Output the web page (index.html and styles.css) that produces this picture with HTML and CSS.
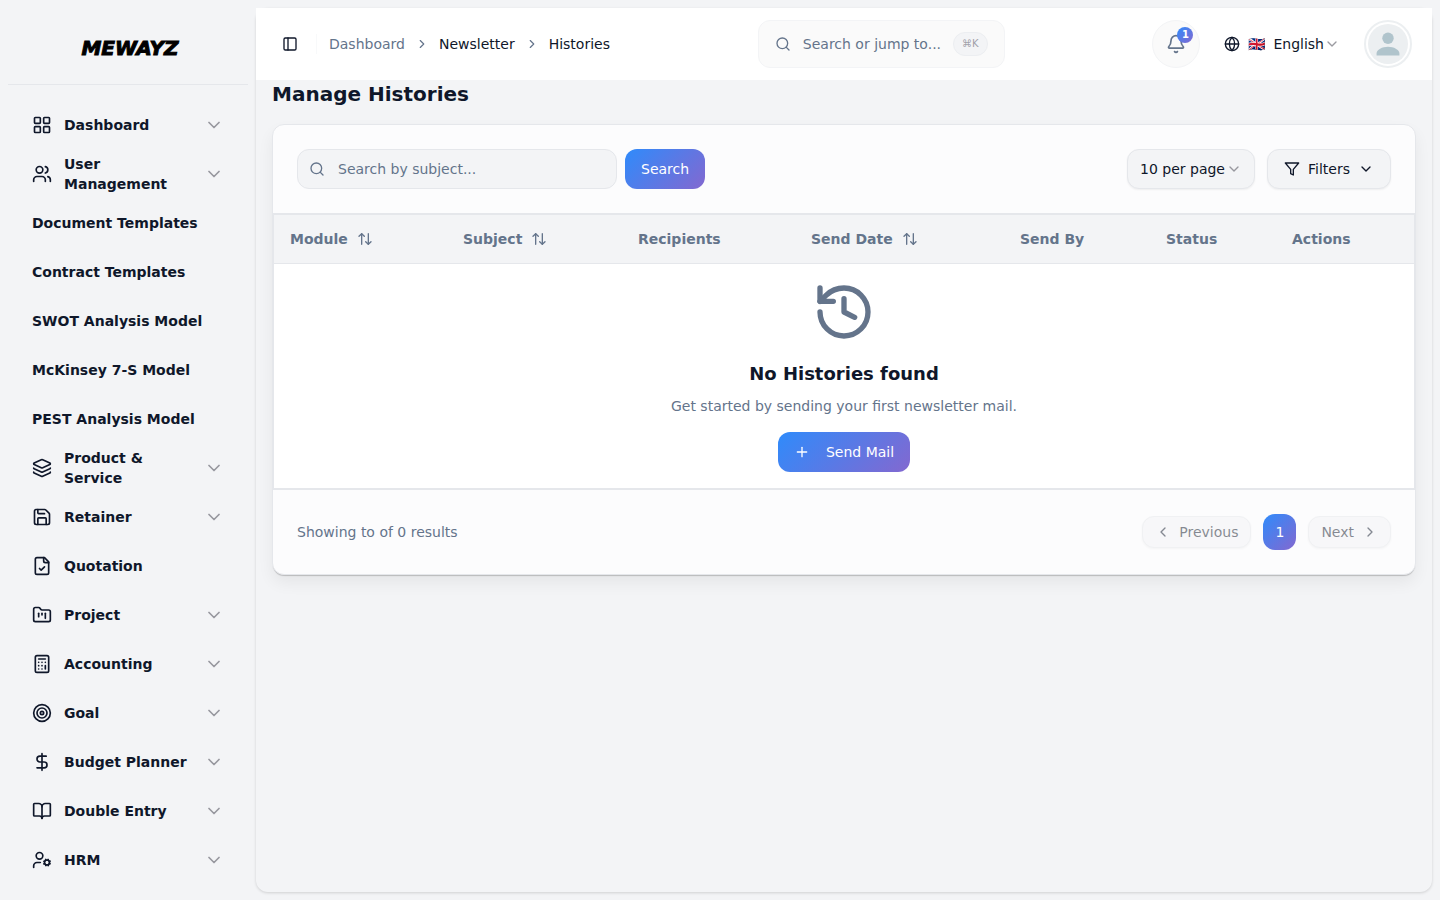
FILE: index.html
```html
<!DOCTYPE html>
<html lang="en">
<head>
  <meta charset="UTF-8">
  <meta name="viewport" content="width=device-width, initial-scale=1.0">
  <title>Manage Histories</title>
  <link rel="stylesheet" href="styles.css">
</head>
<body>
  <!-- icons used more than once -->
  <svg class="sprite" aria-hidden="true">
    <symbol id="chevron-down" viewBox="0 0 24 24"><path d="m6 9 6 6 6-6"/></symbol>
    <symbol id="chevron-right" viewBox="0 0 24 24"><path d="m9 18 6-6-6-6"/></symbol>
    <symbol id="search" viewBox="0 0 24 24"><circle cx="11" cy="11" r="8"/><path d="m21 21-4.3-4.3"/></symbol>
    <symbol id="sort" viewBox="0 0 24 24"><path d="m21 16-4 4-4-4"/><path d="M17 20V4"/><path d="m3 8 4-4 4 4"/><path d="M7 4v16"/></symbol>
  </svg>

  <aside class="sidebar">
    <a href="#" class="logo">MEWAYZ</a>
    <nav class="menu">
      <a href="#">
        <svg class="icon" viewBox="0 0 24 24"><rect x="3" y="3" width="7" height="7" rx="1"/><rect x="14" y="3" width="7" height="7" rx="1"/><rect x="14" y="14" width="7" height="7" rx="1"/><rect x="3" y="14" width="7" height="7" rx="1"/></svg>
        <span>Dashboard</span>
        <svg class="icon arrow"><use href="#chevron-down"/></svg>
      </a>
      <a href="#">
        <svg class="icon" viewBox="0 0 24 24"><path d="M16 21v-2a4 4 0 0 0-4-4H6a4 4 0 0 0-4 4v2"/><circle cx="9" cy="7" r="4"/><path d="M22 21v-2a4 4 0 0 0-3-3.87"/><path d="M16 3.13a4 4 0 0 1 0 7.75"/></svg>
        <span>User Management</span>
        <svg class="icon arrow"><use href="#chevron-down"/></svg>
      </a>
      <a href="#"><span>Document Templates</span></a>
      <a href="#"><span>Contract Templates</span></a>
      <a href="#"><span>SWOT Analysis Model</span></a>
      <a href="#"><span>McKinsey 7-S Model</span></a>
      <a href="#"><span>PEST Analysis Model</span></a>
      <a href="#">
        <svg class="icon" viewBox="0 0 24 24"><path d="M12.83 2.18a2 2 0 0 0-1.66 0L2.6 6.08a1 1 0 0 0 0 1.83l8.58 3.91a2 2 0 0 0 1.66 0l8.58-3.9a1 1 0 0 0 0-1.83z"/><path d="M2 12a1 1 0 0 0 .58.91l8.6 3.91a2 2 0 0 0 1.65 0l8.58-3.9A1 1 0 0 0 22 12"/><path d="M2 17a1 1 0 0 0 .58.91l8.6 3.91a2 2 0 0 0 1.65 0l8.58-3.9A1 1 0 0 0 22 17"/></svg>
        <span>Product &amp; Service</span>
        <svg class="icon arrow"><use href="#chevron-down"/></svg>
      </a>
      <a href="#">
        <svg class="icon" viewBox="0 0 24 24"><path d="M15.2 3a2 2 0 0 1 1.4.6l3.8 3.8a2 2 0 0 1 .6 1.4V19a2 2 0 0 1-2 2H5a2 2 0 0 1-2-2V5a2 2 0 0 1 2-2z"/><path d="M17 21v-7a1 1 0 0 0-1-1H8a1 1 0 0 0-1 1v7"/><path d="M7 3v4a1 1 0 0 0 1 1h7"/></svg>
        <span>Retainer</span>
        <svg class="icon arrow"><use href="#chevron-down"/></svg>
      </a>
      <a href="#">
        <svg class="icon" viewBox="0 0 24 24"><path d="M15 2H6a2 2 0 0 0-2 2v16a2 2 0 0 0 2 2h12a2 2 0 0 0 2-2V7Z"/><path d="M14 2v4a2 2 0 0 0 2 2h4"/><path d="m9 15 2 2 4-4"/></svg>
        <span>Quotation</span>
      </a>
      <a href="#">
        <svg class="icon" viewBox="0 0 24 24"><path d="M4 20h16a2 2 0 0 0 2-2V8a2 2 0 0 0-2-2h-7.93a2 2 0 0 1-1.66-.9l-.82-1.2A2 2 0 0 0 7.93 3H4a2 2 0 0 0-2 2v13c0 1.1.9 2 2 2Z"/><path d="M8 10v4"/><path d="M12 10v2"/><path d="M16 10v6"/></svg>
        <span>Project</span>
        <svg class="icon arrow"><use href="#chevron-down"/></svg>
      </a>
      <a href="#">
        <svg class="icon" viewBox="0 0 24 24"><rect x="4" y="2" width="16" height="20" rx="2"/><path d="M8 6h8"/><path d="M16 14v4"/><path d="M16 10h.01M12 10h.01M8 10h.01M12 14h.01M8 14h.01M12 18h.01M8 18h.01"/></svg>
        <span>Accounting</span>
        <svg class="icon arrow"><use href="#chevron-down"/></svg>
      </a>
      <a href="#">
        <svg class="icon" viewBox="0 0 24 24"><circle cx="12" cy="12" r="10"/><circle cx="12" cy="12" r="6"/><circle cx="12" cy="12" r="2"/></svg>
        <span>Goal</span>
        <svg class="icon arrow"><use href="#chevron-down"/></svg>
      </a>
      <a href="#">
        <svg class="icon" viewBox="0 0 24 24"><path d="M12 2v20"/><path d="M17 5H9.500a3.500 3.500 0 0 0 0 7h5a3.500 3.500 0 0 1 0 7H6"/></svg>
        <span>Budget Planner</span>
        <svg class="icon arrow"><use href="#chevron-down"/></svg>
      </a>
      <a href="#">
        <svg class="icon" viewBox="0 0 24 24"><path d="M12 7v14"/><path d="M3 18a1 1 0 0 1-1-1V4a1 1 0 0 1 1-1h5a4 4 0 0 1 4 4 4 4 0 0 1 4-4h5a1 1 0 0 1 1 1v13a1 1 0 0 1-1 1h-6a3 3 0 0 0-3 3 3 3 0 0 0-3-3z"/></svg>
        <span>Double Entry</span>
        <svg class="icon arrow"><use href="#chevron-down"/></svg>
      </a>
      <a href="#">
        <svg class="icon" viewBox="0 0 24 24"><circle cx="9" cy="7" r="4"/><path d="M10 15H6a4 4 0 0 0-4 4v2"/><circle cx="18" cy="15" r="3"/><path d="m21.700 16.400-.9-.3M15.200 13.900l-.9-.3M16.600 18.700l.3-.9M19.100 12.200l.3-.9M19.600 18.700l-.4-1M16.800 12.300l-.4-1M14.300 16.600l1-.4M20.700 13.800l1-.4"/></svg>
        <span>HRM</span>
        <svg class="icon arrow"><use href="#chevron-down"/></svg>
      </a>
    </nav>
  </aside>

  <main class="content">
    <header class="topbar">
      <div class="topbar-left">
        <button class="toggle" aria-label="Toggle sidebar">
          <svg class="icon" viewBox="0 0 24 24"><rect x="3" y="3" width="18" height="18" rx="2"/><path d="M9 3v18"/></svg>
        </button>
        <nav class="breadcrumb" aria-label="Breadcrumb">
          <a href="#">Dashboard</a>
          <svg class="icon"><use href="#chevron-right"/></svg>
          <span>Newsletter</span>
          <svg class="icon"><use href="#chevron-right"/></svg>
          <span>Histories</span>
        </nav>
      </div>

      <button class="jump">
        <svg class="icon"><use href="#search"/></svg>
        <span>Search or jump to...</span>
        <kbd>⌘K</kbd>
      </button>

      <div class="topbar-right">
        <button class="bell" aria-label="Notifications">
          <svg class="icon" viewBox="0 0 24 24"><path d="M10.268 21a2 2 0 0 0 3.464 0"/><path d="M3.262 15.326A1 1 0 0 0 4 17h16a1 1 0 0 0 .74-1.673C19.410 13.956 18 12.499 18 8A6 6 0 0 0 6 8c0 4.499-1.411 5.956-2.738 7.326"/></svg>
          <span class="badge">1</span>
        </button>
        <button class="language">
          <svg class="icon" viewBox="0 0 24 24"><circle cx="12" cy="12" r="10"/><path d="M12 2a14.500 14.500 0 0 0 0 20 14.500 14.500 0 0 0 0-20"/><path d="M2 12h20"/></svg>
          <span>🇬🇧</span>
          <span>English</span>
          <svg class="icon arrow"><use href="#chevron-down"/></svg>
        </button>
        <button class="avatar" aria-label="Account">
          <svg viewBox="0 0 42 42"><circle cx="21" cy="21" r="21" fill="#eceff1"/><circle cx="21" cy="15" r="6" fill="#b0c4cc"/><path d="M9 33v-2c0-4 6-7 12-7s12 3 12 7v2z" fill="#b0c4cc"/></svg>
        </button>
      </div>
    </header>

    <div class="page">
      <h1>Manage Histories</h1>

      <section class="card">
        <div class="toolbar">
          <form class="search-form">
            <div class="search-box">
              <svg class="icon"><use href="#search"/></svg>
              <input type="text" placeholder="Search by subject..." aria-label="Search by subject">
            </div>
            <button type="button" class="btn-primary">Search</button>
          </form>
          <div class="toolbar-right">
            <div class="select-box">
              <select aria-label="Rows per page">
                <option>10 per page</option>
                <option>25 per page</option>
                <option>50 per page</option>
              </select>
              <svg class="icon arrow"><use href="#chevron-down"/></svg>
            </div>
            <button class="filters">
              <svg class="icon" viewBox="0 0 24 24"><path d="M22 3H2l8 9.460V19l4 2v-8.540z"/></svg>
              Filters
              <svg class="icon"><use href="#chevron-down"/></svg>
            </button>
          </div>
        </div>

        <table>
          <thead>
            <tr>
              <th class="col-module">Module <svg class="icon"><use href="#sort"/></svg></th>
              <th class="col-subject">Subject <svg class="icon"><use href="#sort"/></svg></th>
              <th class="col-recipients">Recipients</th>
              <th class="col-date">Send Date <svg class="icon"><use href="#sort"/></svg></th>
              <th class="col-by">Send By</th>
              <th class="col-status">Status</th>
              <th>Actions</th>
            </tr>
          </thead>
          <tbody>
            <tr>
              <td colspan="7">
                <div class="empty">
                  <svg class="icon" viewBox="0 0 24 24"><path d="M3 12a9 9 0 1 0 9-9 9.750 9.750 0 0 0-6.740 2.740L3 8"/><path d="M3 3v5h5"/><path d="M12 7v5l4 2"/></svg>
                  <h3>No Histories found</h3>
                  <p>Get started by sending your first newsletter mail.</p>
                  <button class="btn-primary send">
                    <svg class="icon" viewBox="0 0 24 24"><path d="M5 12h14"/><path d="M12 5v14"/></svg>
                    Send Mail
                  </button>
                </div>
              </td>
            </tr>
          </tbody>
        </table>

        <div class="card-footer">
          <p>Showing to of 0 results</p>
          <div class="pagination">
            <button class="page-btn" disabled>
              <svg class="icon" viewBox="0 0 24 24"><path d="m15 18-6-6 6-6"/></svg>
              Previous
            </button>
            <button class="btn-primary current">1</button>
            <button class="page-btn" disabled>
              Next
              <svg class="icon"><use href="#chevron-right"/></svg>
            </button>
          </div>
        </div>
      </section>
    </div>
  </main>
</body>
</html>
```
FILE: styles.css
```css
* {
  box-sizing: border-box;
}

body {
  margin: 0;
  display: flex;
  height: 100vh;
  overflow: hidden;
  font-family: "DejaVu Sans", sans-serif;
  font-size: 14px;
  line-height: 20px;
  color: #0f172a;
  background-color: #f3f4f6;
}

h1, h3, p {
  margin: 0;
}

a {
  color: inherit;
  text-decoration: none;
}

button, input, select {
  font: inherit;
  color: inherit;
}

button {
  cursor: pointer;
}

.sprite {
  display: none;
}

.icon {
  width: 16px;
  height: 16px;
  flex-shrink: 0;
  fill: none;
  stroke: currentColor;
  stroke-width: 2;
  stroke-linecap: round;
  stroke-linejoin: round;
}

.arrow {
  color: #71717a;
  opacity: 0.7;
}

/* Sidebar */
.sidebar {
  width: 256px;
  flex-shrink: 0;
  padding: 8px;
}

.logo {
  display: flex;
  align-items: center;
  justify-content: center;
  height: 77px;
  padding: 4px 0 0 4px;
  border-bottom: 1px solid #e5e7eb;
  color: #000;
  font-size: 20px;
  font-style: italic;
  font-weight: bold;
  -webkit-text-stroke: 1px #000;
}

.menu {
  padding: 16px;
  display: flex;
  flex-direction: column;
  gap: 1px;
}

.menu a {
  display: flex;
  align-items: center;
  gap: 12px;
  height: 48px;
  padding: 0 8px;
  font-weight: bold;
}

.menu span {
  flex: 1;
}

.menu .icon {
  width: 20px;
  height: 20px;
}

/* Main area */
.content {
  flex: 1;
  min-width: 0;
  margin: 8px 8px 8px 0;
  border-radius: 12px;
  box-shadow: 0 1px 3px rgba(0, 0, 0, 0.15);
}

.topbar {
  display: flex;
  align-items: center;
  justify-content: space-between;
  height: 72px;
  padding: 0 20px;
  background-color: #fff;
}

.topbar-left, .topbar-right, .breadcrumb {
  display: flex;
  align-items: center;
}

.toggle {
  display: flex;
  margin-right: 12px;
  padding: 6px;
  border: none;
  background: none;
}

.breadcrumb {
  gap: 10px;
  padding-left: 12px;
  border-left: 1px solid #f8f9fa;
}

.breadcrumb a, .breadcrumb .icon {
  color: #64748b;
}

.breadcrumb .icon {
  width: 14px;
  height: 14px;
}

.jump {
  display: flex;
  align-items: center;
  gap: 12px;
  height: 48px;
  padding: 0 16px;
  border: 1px solid #f3f4f6;
  border-radius: 12px;
  background-color: #fafafa;
  color: #64748b;
}

.jump kbd {
  display: flex;
  align-items: center;
  height: 24px;
  padding: 0 8px;
  border: 1px solid #eceef1;
  border-radius: 12px;
  background-color: #f3f4f6;
  font-family: inherit;
  font-size: 10px;
  color: #a1a1aa;
}

.bell {
  position: relative;
  display: flex;
  align-items: center;
  justify-content: center;
  width: 48px;
  height: 48px;
  padding: 0;
  border: 1px solid #f3f4f6;
  border-radius: 50%;
  background-color: #fafafa;
  color: #64748b;
}

.bell .icon {
  width: 20px;
  height: 20px;
}

.badge {
  position: absolute;
  top: 6px;
  right: 6px;
  width: 16px;
  height: 16px;
  border-radius: 50%;
  background: linear-gradient(135deg, #2f8bfb, #8368d0);
  color: #fff;
  font-size: 10px;
  font-weight: bold;
  line-height: 16px;
  text-align: center;
}

.language {
  display: flex;
  align-items: center;
  gap: 8px;
  margin: 0 24px;
  padding: 0;
  border: none;
  background: none;
}

.language .arrow {
  margin-left: -8px;
}

.avatar {
  display: flex;
  width: 48px;
  height: 48px;
  padding: 2px;
  border: 2px solid #eceff1;
  border-radius: 50%;
  background-color: #fff;
}

.avatar svg {
  width: 100%;
}

/* Page */
.page {
  padding: 0 16px;
}

h1 {
  margin-bottom: 16px;
  font-size: 20px;
  line-height: 28px;
}

.card {
  border: 1px solid #e5e7eb;
  border-radius: 12px;
  background-color: #fcfcfd;
  box-shadow: 0 2px 1px -1px rgba(0, 0, 0, 0.2), 0 8px 16px rgba(0, 0, 0, 0.06);
}

.toolbar, .card-footer {
  display: flex;
  align-items: center;
  justify-content: space-between;
  padding: 24px;
}

.search-form {
  display: flex;
  gap: 8px;
}

.search-box, .select-box {
  position: relative;
}

.search-box .icon {
  position: absolute;
  left: 12px;
  top: 12px;
  color: #64748b;
}

.search-box input {
  width: 320px;
  height: 40px;
  padding: 0 40px;
  border: 1px solid #e5e7eb;
  border-radius: 12px;
  background-color: #f3f4f6;
}

.search-box input::placeholder {
  color: #64748b;
}

.btn-primary {
  height: 40px;
  padding: 0 16px;
  border: none;
  border-radius: 12px;
  background: linear-gradient(135deg, #2f8bfb, #8368d0);
  color: #fff;
}

.toolbar-right {
  display: flex;
  gap: 12px;
}

.select-box select, .filters {
  height: 40px;
  border: 1px solid #e5e7eb;
  border-radius: 12px;
  background-color: #f3f4f6;
  box-shadow: 0 1px 2px rgba(0, 0, 0, 0.06);
}

.select-box select {
  width: 128px;
  padding: 0 12px;
  appearance: none;
}

.select-box .icon {
  position: absolute;
  right: 13px;
  top: 12px;
  pointer-events: none;
}

.filters {
  display: flex;
  align-items: center;
  gap: 8px;
  padding: 0 16px;
}

table {
  width: 100%;
  border: 2px solid #e5e7eb;
  border-spacing: 0;
  border-left-width: 1px;
  border-right-width: 1px;
  background-color: #fff;
}

th {
  height: 49px;
  padding: 0 16px;
  border-bottom: 1px solid #e5e7eb;
  background-color: #f3f4f6;
  color: #64748b;
  text-align: left;
}

th .icon {
  margin-left: 4px;
  vertical-align: text-bottom;
}

.col-module {
  width: 173px;
}

.col-subject {
  width: 175px;
}

.col-recipients {
  width: 173px;
}

.col-date {
  width: 209px;
}

.col-by {
  width: 146px;
}

.col-status {
  width: 126px;
}

td {
  padding: 16px;
}

.empty {
  display: flex;
  flex-direction: column;
  align-items: center;
}

.empty > .icon {
  width: 64px;
  height: 64px;
  margin-bottom: 16px;
  color: #64748b;
}

.empty h3 {
  margin-bottom: 8px;
  font-size: 18px;
  line-height: 28px;
}

.empty p {
  margin-bottom: 16px;
  color: #64748b;
}

.send {
  display: flex;
  align-items: center;
  gap: 16px;
}

.card-footer p {
  color: #64748b;
}

.pagination {
  display: flex;
  align-items: center;
  gap: 12px;
}

.page-btn {
  display: flex;
  align-items: center;
  gap: 8px;
  height: 32px;
  padding: 0 12px;
  border: 1px solid #e5e7eb;
  border-radius: 12px;
  background-color: #f3f4f6;
  box-shadow: 0 1px 2px rgba(0, 0, 0, 0.06);
  opacity: 0.5;
}

.current {
  height: 36px;
  padding: 0 12px;
}
```
